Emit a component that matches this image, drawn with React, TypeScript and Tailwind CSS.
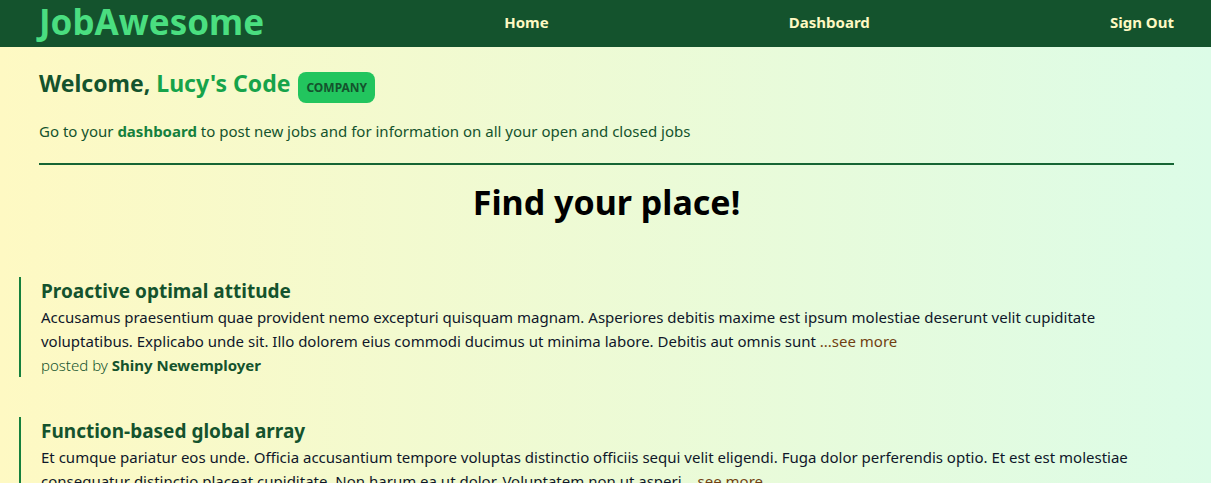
const jobs = [
  {
    title: "Proactive optimal attitude",
    summary:
      "Accusamus praesentium quae provident nemo excepturi quisquam magnam. Asperiores debitis maxime est ipsum molestiae deserunt velit cupiditate voluptatibus. Explicabo unde sit. Illo dolorem eius commodi ducimus ut minima labore. Debitis aut omnis sunt",
    employer: "Shiny Newemployer",
  },
  {
    title: "Function-based global array",
    summary:
      "Et cumque pariatur eos unde. Officia accusantium tempore voluptas distinctio officiis sequi velit eligendi. Fuga dolor perferendis optio. Et est est molestiae consequatur distinctio placeat cupiditate. Non harum ea ut dolor. Voluptatem non ut asperi",
    employer: "Shiny Newemployer",
  },
];

function Header() {
  return (
    <header className="bg-[#14532d] pr-[37px] pl-[39px]">
      <nav className="flex h-[47px] items-center justify-between pb-1 font-bold text-[#fef9c3]">
        <a href="#home" className="text-[35px] leading-10 text-[#4ade80]">
          JobAwesome
        </a>
        <a href="#home">Home</a>
        <a href="#dashboard">Dashboard</a>
        <a href="#signout">Sign Out</a>
      </nav>
    </header>
  );
}

function Welcome() {
  return (
    <section className="border-b-2 border-[#166534] pt-5 pb-5 text-[#14532d]">
      <div className="flex items-start gap-2">
        <h2 className="text-[23px] leading-8 font-bold">
          Welcome, <span className="text-[#16a34a]">Lucy's Code</span>
        </h2>
        <span className="mt-[5px] rounded-lg bg-[#22c55e] px-2 py-2 text-[12px] leading-[15px] font-bold">
          COMPANY
        </span>
      </div>
      <p className="mt-4">
        Go to your{" "}
        <a href="#dashboard" className="font-bold text-[#15803d]">
          dashboard
        </a>{" "}
        to post new jobs and for information on all your open and closed jobs
      </p>
    </section>
  );
}

export default function App() {
  return (
    <div className="min-h-screen bg-linear-to-r/srgb from-[#fef9c3] to-[#dcfce7] font-['Noto_Sans',sans-serif] text-[15px] leading-6">
      <Header />
      <main className="pr-[37px] pl-[39px]">
        <Welcome />
        <h1 className="mt-4 text-center text-[34px] leading-[42px] font-bold text-black">
          Find your place!
        </h1>
        <ul className="mt-[54px] -ml-5 space-y-10">
          {jobs.map((job) => (
            <li key={job.title} className="border-l-2 border-[#15803d] pl-5">
              <h3 className="text-[19px] leading-7 font-bold text-[#14532d]">{job.title}</h3>
              <p className="text-[#0f172a]">
                {job.summary}{" "}
                <a href="#job" className="text-[#713f12]">
                  ...see more
                </a>
              </p>
              <p className="font-light text-[#14532d]">
                posted by <span className="font-bold">{job.employer}</span>
              </p>
            </li>
          ))}
        </ul>
      </main>
    </div>
  );
}
